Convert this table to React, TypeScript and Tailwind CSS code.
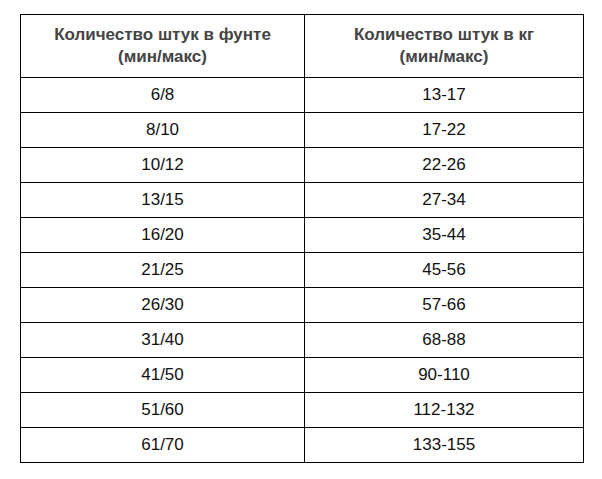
const rows: [string, string][] = [
  ["6/8", "13-17"],
  ["8/10", "17-22"],
  ["10/12", "22-26"],
  ["13/15", "27-34"],
  ["16/20", "35-44"],
  ["21/25", "45-56"],
  ["26/30", "57-66"],
  ["31/40", "68-88"],
  ["41/50", "90-110"],
  ["51/60", "112-132"],
  ["61/70", "133-155"],
];

export default function App() {
  return (
    <div className="w-[602px] h-[479px] bg-white pt-[14px] pl-[20px] font-['Liberation_Sans',Arial,sans-serif]">
      <table className="border-collapse w-[563px] table-fixed">
        <colgroup>
          <col className="w-[284px]" />
          <col className="w-[279px]" />
        </colgroup>
        <thead>
          <tr className="h-[63px]">
            <th className="border border-black text-center align-middle text-[17px] leading-[22px] font-bold text-[#444]">
              Количество штук в фунте
              <br />
              (мин/макс)
            </th>
            <th className="border border-black text-center align-middle text-[17px] leading-[22px] font-bold text-[#444]">
              Количество штук в кг
              <br />
              (мин/макс)
            </th>
          </tr>
        </thead>
        <tbody>
          {rows.map(([a, b]) => (
            <tr key={a} className="h-[35px]">
              <td className="border border-black text-center align-middle text-[17px] text-[#111]">{a}</td>
              <td className="border border-black text-center align-middle text-[17px] text-[#111]">{b}</td>
            </tr>
          ))}
        </tbody>
      </table>
    </div>
  );
}
